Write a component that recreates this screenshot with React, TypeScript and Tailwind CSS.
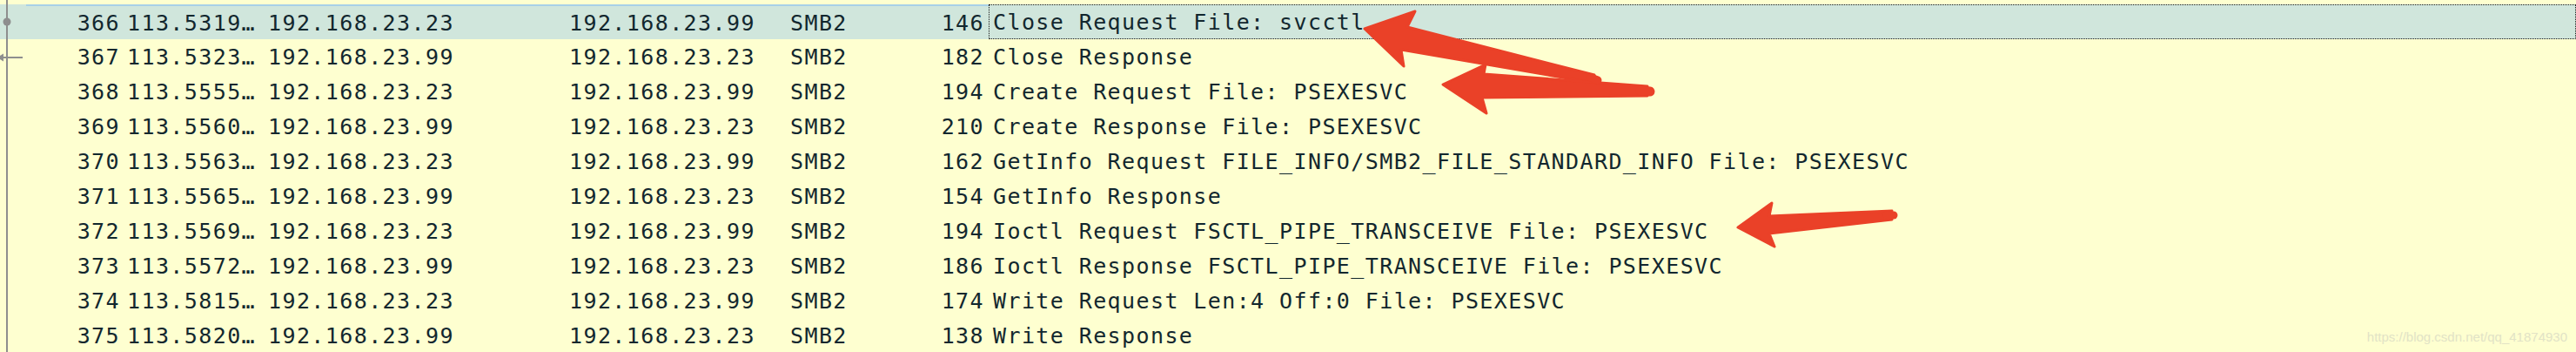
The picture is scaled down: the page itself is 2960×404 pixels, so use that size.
import React from 'react';

type Packet = {
  no: number;
  time: string;
  src: string;
  dst: string;
  proto: string;
  len: number;
  info: string;
};

const A = '192.168.23.23';
const B = '192.168.23.99';

const packets: Packet[] = [
  { no: 366, time: '113.5319…', src: A, dst: B, proto: 'SMB2', len: 146, info: 'Close Request File: svcctl' },
  { no: 367, time: '113.5323…', src: B, dst: A, proto: 'SMB2', len: 182, info: 'Close Response' },
  { no: 368, time: '113.5555…', src: A, dst: B, proto: 'SMB2', len: 194, info: 'Create Request File: PSEXESVC' },
  { no: 369, time: '113.5560…', src: B, dst: A, proto: 'SMB2', len: 210, info: 'Create Response File: PSEXESVC' },
  { no: 370, time: '113.5563…', src: A, dst: B, proto: 'SMB2', len: 162, info: 'GetInfo Request FILE_INFO/SMB2_FILE_STANDARD_INFO File: PSEXESVC' },
  { no: 371, time: '113.5565…', src: B, dst: A, proto: 'SMB2', len: 154, info: 'GetInfo Response' },
  { no: 372, time: '113.5569…', src: A, dst: B, proto: 'SMB2', len: 194, info: 'Ioctl Request FSCTL_PIPE_TRANSCEIVE File: PSEXESVC' },
  { no: 373, time: '113.5572…', src: B, dst: A, proto: 'SMB2', len: 186, info: 'Ioctl Response FSCTL_PIPE_TRANSCEIVE File: PSEXESVC' },
  { no: 374, time: '113.5815…', src: A, dst: B, proto: 'SMB2', len: 174, info: 'Write Request Len:4 Off:0 File: PSEXESVC' },
  { no: 375, time: '113.5820…', src: B, dst: A, proto: 'SMB2', len: 138, info: 'Write Response' },
];

// related-packet marker in the left gutter
function Gutter({ kind, h }: { kind: 'line' | 'dot' | 'reply'; h: number }) {
  return (
    <svg width="30" height={h} className="shrink-0 block">
      <line x1="8" y1="0" x2="8" y2={h} stroke="#8e8e8e" strokeWidth="2" />
      {kind === 'dot' && <circle cx="8" cy="20" r="4.5" fill="#8e8e8e" />}
      {kind === 'reply' && (
        <>
          <line x1="2" y1="21" x2="26" y2="21" stroke="#8e8e8e" strokeWidth="2" />
          <polygon points="-3,21 4,16.5 4,25.5" fill="#8e8e8e" />
        </>
      )}
    </svg>
  );
}

function Row({ p, i }: { p: Packet; i: number }) {
  const selected = i === 0;
  const top = selected ? 'border-t-2 border-[#a8d0e8]' : '';
  return (
    <div className={`flex h-[40px] items-stretch whitespace-nowrap ${selected ? 'bg-[#d0e6dc]' : ''}`}>
      <Gutter kind={i === 0 ? 'dot' : i === 1 ? 'reply' : 'line'} h={40} />
      <div className={`w-[110px] shrink-0 flex items-center justify-end pr-[2px] ${top}`}>{p.no}</div>
      <div className={`w-[162px] shrink-0 flex items-center pl-[6px] ${top}`}>{p.time}</div>
      <div className={`w-[346px] shrink-0 flex items-center pl-[6px] ${top}`}>{p.src}</div>
      <div className={`w-[254px] shrink-0 flex items-center pl-[6px] ${top}`}>{p.dst}</div>
      <div className={`w-[98px] shrink-0 flex items-center pl-[6px] ${top}`}>{p.proto}</div>
      <div className={`w-[136px] shrink-0 flex items-center justify-end pr-[5px] ${top}`}>{p.len}</div>
      <div
        className={`flex-1 flex items-center pl-[4px] border border-dotted ${
          selected ? 'border-[#1a1a1a]' : 'border-transparent'
        }`}
      >
        {p.info}
      </div>
    </div>
  );
}

export default function App() {
  return (
    <div className="relative w-[2960px] h-[404px] overflow-hidden bg-[#feffd0] text-[#12272e] font-['DejaVu_Sans_Mono',monospace] text-[25px] tracking-[1.4px] leading-none">
      <div className="flex h-[5px]">
        <Gutter kind="line" h={5} />
      </div>
      {packets.map((p, i) => (
        <Row key={p.no} p={p} i={i} />
      ))}

      {/* red annotation arrows */}
      <svg className="absolute inset-0 pointer-events-none" width="2960" height="404">
        <g fill="#ea4128" stroke="#ea4128" strokeWidth="3" strokeLinejoin="round">
          <polygon points="1568,33 1626,13 1617,31 1832,86 1836,96 1610,57 1613,76" />
          <polygon points="1658,97 1707,74 1705,85 1893,99 1893,110 1703,112 1708,130" />
          <polygon points="1997,261 2036,233 2033,248 2174,242 2174,252 2033,268 2039,283" />
        </g>
        <g stroke="#ea4128" strokeLinecap="round">
          <line x1="1828" y1="89" x2="1836" y2="92" strokeWidth="9" />
          <line x1="1885" y1="104" x2="1896" y2="105" strokeWidth="11" />
          <line x1="2168" y1="247" x2="2176" y2="247" strokeWidth="9" />
        </g>
      </svg>

      <div className="absolute right-[10px] bottom-[10px] font-['Liberation_Sans',Arial,sans-serif] text-[15px] tracking-normal text-[#e2e3c6]">
        https://blog.csdn.net/qq_41874930
      </div>
    </div>
  );
}
